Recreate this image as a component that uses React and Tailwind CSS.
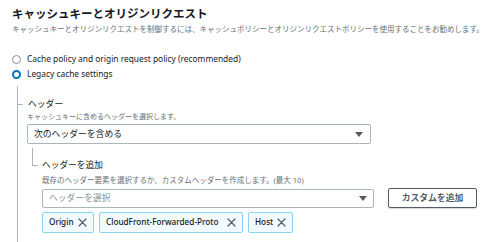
import React from 'react';

const CaretDown = () => (
    <svg width="8" height="5" viewBox="0 0 8 5" className="shrink-0">
        <path d="M0 0h8L4 5z" fill="#545b64" />
    </svg>
);

const CloseIcon = () => (
    <svg width="9" height="9" viewBox="0 0 9 9" className="shrink-0">
        <path d="M1 1l7 7M8 1L1 8" stroke="#545b64" strokeWidth="1.2" strokeLinecap="round" />
    </svg>
);

const Token = ({ label, width }) => (
    <div className={`flex items-center justify-between h-[21px] ${width} pl-[6px] pr-[6px] bg-[#f1faff] border border-[#88d4ec] rounded-[2px]`}>
        <span className="text-[8.2px] font-medium text-[#16191f] leading-none whitespace-nowrap">{label}</span>
        <CloseIcon />
    </div>
);

const Radio = ({ checked, label }) => (
    <div className="flex items-center h-[15px]">
        {checked ? (
            <span className="w-[9px] h-[9px] rounded-full border-[2.5px] border-[#0073bb] bg-white" />
        ) : (
            <span className="w-[9px] h-[9px] rounded-full border border-[#879596] bg-white" />
        )}
        <span className="ml-[6px] text-[8.4px] text-[#16191f] leading-none">{label}</span>
    </div>
);

export default function App() {
    const headers = [
        { label: 'Origin', width: 'w-[52px]' },
        { label: 'CloudFront-Forwarded-Proto', width: 'w-[144px]' },
        { label: 'Host', width: 'w-[45px]' },
    ];

    return (
        <div className="w-[500px] h-[242px] overflow-hidden bg-white pl-[12px] pt-[6px] font-['Noto_Sans','Noto_Sans_CJK_JP',sans-serif]">
            <h2 className="text-[11.5px] font-bold leading-[16px] text-[#16191f]">キャッシュキーとオリジンリクエスト</h2>
            <p className="mt-[1px] text-[7.5px] leading-[12px] text-[#687078] whitespace-nowrap">
                キャッシュキーとオリジンリクエストを制御するには、キャッシュポリシーとオリジンリクエストポリシーを使用することをお勧めします。
            </p>

            <div className="mt-[17px]">
                <Radio label="Cache policy and origin request policy (recommended)" />
                <Radio checked label="Legacy cache settings" />
            </div>

            <div className="mt-[4px] ml-[5px] border-l border-[#aab7b8] pt-[12px] h-[200px]">
                <div className="flex items-center h-[12px]">
                    <span className="w-[5px] h-px bg-[#aab7b8]" />
                    <span className="ml-[5px] text-[8.8px] leading-[12px] text-[#16191f]">ヘッダー</span>
                </div>
                <div className="pl-[9px]">
                    <p className="mt-[1px] text-[7px] leading-[12px] text-[#687078]">キャッシュキーに含めるヘッダーを選択します。</p>
                    <div className="mt-[1px] w-[344px] h-[20px] border border-[#aab7b8] rounded-[2px] flex items-center justify-between pl-[6px] pr-[7px]">
                        <span className="text-[8.8px] text-[#16191f] leading-none">次のヘッダーを含める</span>
                        <CaretDown />
                    </div>

                    <div className="mt-[4px] flex items-end">
                        <div className="ml-[5px] w-[6px] h-[18px] border-l border-b border-[#aab7b8]" />
                        <span className="ml-[4px] -mb-[5px] text-[8.7px] leading-[12px] text-[#16191f]">ヘッダーを追加</span>
                    </div>

                    <div className="pl-[15px]">
                        <p className="mt-[8px] text-[7.5px] leading-[12px] text-[#687078] whitespace-nowrap">
                            既存のヘッダー要素を選択するか、カスタムヘッダーを作成します。(最大 10)
                        </p>
                        <div className="mt-[2px] flex items-center">
                            <div className="w-[332px] h-[19px] border border-[#aab7b8] rounded-[2px] flex items-center justify-between pl-[6px] pr-[6px]">
                                <span className="text-[8.8px] text-[#879596] leading-none">ヘッダーを選択</span>
                                <CaretDown />
                            </div>
                            <button className="ml-[14px] w-[89px] h-[20px] border border-[#545b64] rounded-[2px] bg-white text-[8.8px] font-bold text-[#545b64] leading-none shadow-[0_1px_1px_rgba(0,0,0,0.15)]">
                                カスタムを追加
                            </button>
                        </div>
                        <div className="mt-[4px] flex gap-[5px]">
                            {headers.map((h) => (
                                <Token key={h.label} label={h.label} width={h.width} />
                            ))}
                        </div>
                    </div>
                </div>
            </div>
        </div>
    );
}
